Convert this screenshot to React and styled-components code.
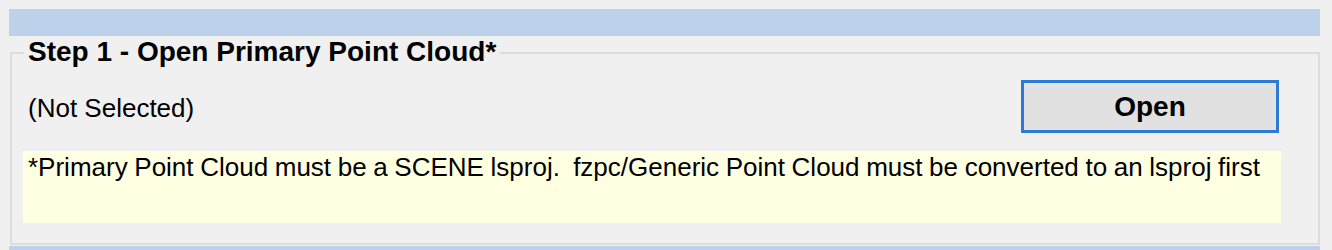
import styled, { createGlobalStyle } from "styled-components";

const GlobalStyle = createGlobalStyle`
  html, body {
    margin: 0;
    padding: 0;
    background: #f0f0f0;
  }
  body {
    font-family: "Liberation Sans", Arial, sans-serif;
    color: #000;
  }
`;

const Page = styled.div`
  width: 1332px;
  height: 250px;
  box-sizing: border-box;
  padding: 9px 12px 0 9px;
  overflow: hidden;
  background: #f0f0f0;
`;

const Band = styled.div`
  height: ${(p) => p.height}px;
  background: #bdd2ea;
`;

const GroupBox = styled.section`
  margin: 16px 0 1px 1px;
  border: 2px solid #dcdcdc;
  padding: 0 0 20px 0;
  width: 1310px;
  box-sizing: border-box;
`;

const Title = styled.h2`
  display: block;
  width: fit-content;
  margin: -16px 0 0 12px;
  padding: 0 4px;
  background: #f0f0f0;
  font-size: 28px;
  line-height: 28px;
  font-weight: bold;
`;

const Row = styled.div`
  display: flex;
  align-items: center;
  justify-content: space-between;
  margin: 14px 39px 0 16px;
`;

const Status = styled.span`
  font-size: 26px;
  line-height: 30px;
  margin-top: 2px;
`;

const Button = styled.button`
  width: 258px;
  height: 53px;
  box-sizing: border-box;
  border: 3px solid #2b7bd6;
  background: #e1e1e1;
  font-family: "Liberation Sans", Arial, sans-serif;
  font-size: 28px;
  font-weight: bold;
  color: #000;
  padding: 0;
  cursor: pointer;
`;

const Note = styled.div`
  margin: 18px 0 0 11px;
  width: 1258px;
  height: 72px;
  box-sizing: border-box;
  background: #ffffe1;
  padding: 1px 0 0 5px;
  font-size: 26px;
  line-height: 30px;
  word-spacing: -0.6px;
  white-space: pre;
`;

export default function App() {
  return (
    <>
      <GlobalStyle />
      <Page>
        <Band height={27} />
        <GroupBox>
          <Title>Step 1 - Open Primary Point Cloud*</Title>
          <Row>
            <Status>(Not Selected)</Status>
            <Button>Open</Button>
          </Row>
          <Note>
            {"*Primary Point Cloud must be a SCENE lsproj.  fzpc/Generic Point Cloud must be converted to an lsproj first"}
          </Note>
        </GroupBox>
        <Band height={10} />
      </Page>
    </>
  );
}
